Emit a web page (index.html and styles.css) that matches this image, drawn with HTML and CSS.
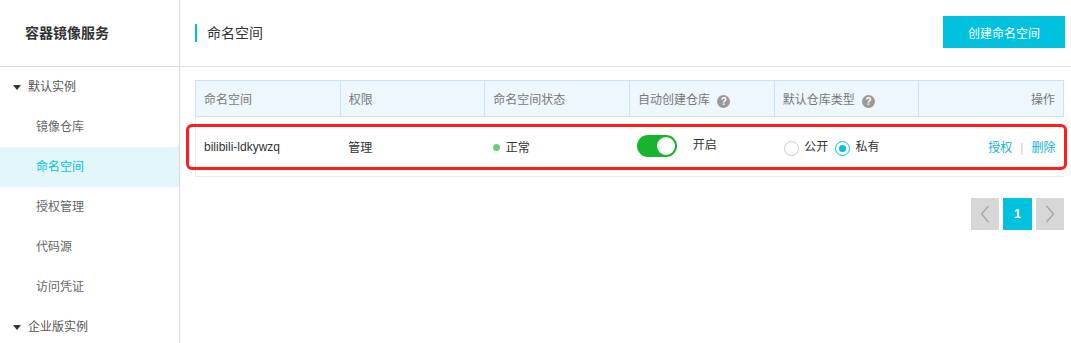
FILE: index.html
```html
<!DOCTYPE html>
<html lang="zh-CN">
<head>
  <meta charset="UTF-8">
  <title>命名空间 - 容器镜像服务</title>
  <link rel="stylesheet" href="styles.css">
</head>
<body>
  <div class="layout">
    <aside class="sidebar">
      <div class="side-head">容器镜像服务</div>
      <div class="side-group"><span class="caret"></span>默认实例</div>
      <div class="side-item">镜像仓库</div>
      <div class="side-item active">命名空间</div>
      <div class="side-item">授权管理</div>
      <div class="side-item">代码源</div>
      <div class="side-item">访问凭证</div>
      <div class="side-group"><span class="caret"></span>企业版实例</div>
    </aside>
    <main class="main">
      <div class="page-head">
        <h2 class="page-title">命名空间</h2>
        <button class="btn-primary">创建命名空间</button>
      </div>
      <div class="content">
        <table class="ns-table">
          <thead>
            <tr>
              <th>命名空间</th>
              <th>权限</th>
              <th>命名空间状态</th>
              <th>自动创建仓库 <span class="help">?</span></th>
              <th>默认仓库类型 <span class="help">?</span></th>
              <th class="right">操作</th>
            </tr>
          </thead>
          <tbody>
            <tr>
              <td class="name">bilibili-ldkywzq</td>
              <td>管理</td>
              <td><span class="dot"></span>正常</td>
              <td>
                <span class="switch"><span class="knob"></span></span>
                <span class="switch-label">开启</span>
              </td>
              <td>
                <span class="radio"></span>公开
                <span class="radio checked"></span>私有
              </td>
              <td class="right">
                <a class="link">授权</a><span class="sep">|</span><a class="link">删除</a>
              </td>
            </tr>
          </tbody>
        </table>
        <div class="pager">
          <span class="page-btn">
            <svg width="10" height="18" viewBox="0 0 10 18"><polyline points="8.5,1 1.5,9 8.5,17" fill="none" stroke="#a6a6a6" stroke-width="1.4"/></svg>
          </span>
          <span class="page-btn current">1</span>
          <span class="page-btn">
            <svg width="10" height="18" viewBox="0 0 10 18"><polyline points="1.5,1 8.5,9 1.5,17" fill="none" stroke="#a6a6a6" stroke-width="1.4"/></svg>
          </span>
        </div>
        <div class="highlight"></div>
      </div>
    </main>
  </div>
</body>
</html>
```

FILE: styles.css
```css
body {
  margin: 0;
  font-family: 'Liberation Sans', 'Noto Sans CJK SC', Arial, sans-serif;
  font-size: 12px;
  color: #333;
  background: #fff;
}
.layout {
  display: flex;
  height: 343px;
  overflow: hidden;
}
.sidebar {
  width: 179px;
  border-right: 1px solid #dcdcdc;
  flex-shrink: 0;
}
.side-head {
  height: 66px;
  line-height: 66px;
  padding-left: 25px;
  font-size: 14px;
  font-weight: bold;
  color: #333;
  border-bottom: 1px solid #dcdcdc;
}
.side-group {
  height: 40px;
  line-height: 40px;
  padding-left: 13px;
  color: #555;
  display: flex;
  align-items: center;
}
.caret {
  width: 0;
  height: 0;
  border-left: 4px solid transparent;
  border-right: 4px solid transparent;
  border-top: 5px solid #333;
  margin-right: 7px;
}
.side-item {
  height: 40px;
  line-height: 40px;
  padding-left: 36px;
  color: #666;
}
.side-item.active {
  background: #e3f6fa;
  color: #00c1de;
}
.main {
  flex: 1;
}
.page-head {
  height: 66px;
  border-bottom: 1px solid #e4e4e4;
  display: flex;
  align-items: center;
  justify-content: space-between;
  padding: 0 6px 0 15px;
}
.page-title {
  margin: 0;
  font-size: 14px;
  font-weight: normal;
  color: #333;
  border-left: 2px solid #00c1de;
  padding-left: 10px;
  line-height: 18px;
}
.btn-primary {
  background: #00c1de;
  color: #fff;
  border: none;
  width: 122px;
  height: 32px;
  font-family: inherit;
  font-size: 12px;
  margin-top: -2px;
}
.content {
  position: relative;
  padding: 13px 7px 0 15px;
}
.ns-table {
  width: 869px;
  border-collapse: collapse;
  table-layout: fixed;
}
.ns-table th {
  background: #eff7fe;
  border: 1px solid #cce2f7;
  height: 35px;
  text-align: left;
  font-weight: normal;
  color: #777;
  padding: 0 8px;
}
.ns-table td {
  height: 59px;
  padding: 0 8px;
  border-bottom: 1px solid #ececec;
  color: #333;
}
.ns-table td:first-child {
  border-left: 1px solid #ececec;
}
.ns-table .right {
  text-align: right;
}
.help {
  display: inline-block;
  width: 13px;
  height: 13px;
  line-height: 13px;
  border-radius: 50%;
  background: #999;
  color: #fff;
  font-size: 10px;
  font-weight: bold;
  text-align: center;
  margin-left: 4px;
  vertical-align: -1px;
}
.dot {
  display: inline-block;
  width: 7px;
  height: 7px;
  border-radius: 50%;
  background: #6ccf76;
  margin-right: 6px;
  vertical-align: 1px;
}
.switch {
  display: inline-block;
  position: relative;
  width: 40px;
  height: 22px;
  border-radius: 11px;
  background: #17b42e;
  vertical-align: middle;
  margin-top: -2px;
}
.knob {
  position: absolute;
  right: 2px;
  top: 2px;
  width: 18px;
  height: 18px;
  border-radius: 50%;
  background: #fff;
}
.switch-label {
  margin-left: 12px;
  vertical-align: middle;
  position: relative;
  top: -3px;
}
.radio {
  display: inline-block;
  width: 13px;
  height: 13px;
  border: 1px solid #c8c8c8;
  border-radius: 50%;
  vertical-align: middle;
  margin-right: 5px;
  margin-left: 2px;
  position: relative;
}
.radio.checked {
  margin-left: 4px;
  border-color: #00c1de;
}
.radio.checked::after {
  content: "";
  position: absolute;
  left: 3px;
  top: 3px;
  width: 7px;
  height: 7px;
  border-radius: 50%;
  background: #00c1de;
}
.link {
  color: #12b3d6;
}
.sep {
  color: #ccc;
  margin: 0 8px;
}
.pager {
  display: flex;
  justify-content: flex-end;
  gap: 4px;
  margin-top: 21px;
}
.page-btn {
  width: 28px;
  height: 32px;
  background: #d7d7d7;
  display: flex;
  align-items: center;
  justify-content: center;
}
.page-btn.current {
  width: 29px;
  background: #00c1de;
  color: #fff;
  font-size: 12px;
  font-weight: bold;
}
.highlight {
  position: absolute;
  left: 6px;
  top: 57px;
  width: 875px;
  height: 40px;
  border: 3px solid #ff1c1c;
  border-radius: 6px;
}
```
